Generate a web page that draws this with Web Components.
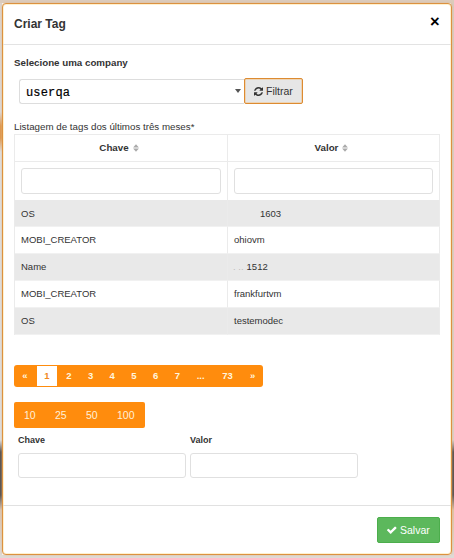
<!DOCTYPE html>
<html lang="pt-BR"><head><meta charset="utf-8"><title>Criar Tag</title>
<style>
html,body{margin:0;height:558px;overflow:hidden}
body{font-family:"Liberation Sans",Arial,sans-serif;color:#333;
background:linear-gradient(#dccbbb,#dccbbb) top/100% 3px no-repeat,linear-gradient(#dedad6,#dedad6) bottom/100% 3px no-repeat,
linear-gradient(#ddd3ca 0,#dcd8d6 112px,#df984d 126px,#df984d 138px,#dedede 152px,#dedede 440px,#57524f 452px,#57524f 495px,#dac5b2 510px,#dedad6 558px) left/2px 100% no-repeat,
linear-gradient(#d9cbbf 0,#dcd0c6 440px,#57524f 452px,#57524f 495px,#dfc2a5 510px,#dedad6 558px) right/3px 100% no-repeat}
</style></head><body><tag-dialog></tag-dialog>
<script>
const define=(name,html)=>{
 const t=document.createElement('template');t.innerHTML='<style>*{box-sizing:border-box}</style>'+html;
 customElements.define(name,class extends HTMLElement{constructor(){super();this.attachShadow({mode:'open'}).append(t.content.cloneNode(true))}});
};
define('text-field',`<style>:host{display:block;box-sizing:border-box;height:26px;border:1px solid #e0e0e0;border-radius:3px;background:#fff}</style>`);
define('sort-icon',`<style>:host{display:block;width:6px;height:8px;margin-top:1px}svg{display:block}</style><svg width="6" height="8" viewBox="0 0 6 8" fill="#aaa"><path d="M3 .3 5.9 3.4H.1zM3 7.7.1 4.6h5.8z"/></svg>`);
define('company-select',`<style>:host{display:flex;box-sizing:border-box;width:225px;height:25px;border:1px solid #ddd;border-right:0;border-radius:3px 0 0 3px;padding:1px 3px 0 6px;align-items:center;justify-content:space-between;font:12px/16px "Liberation Mono",monospace;color:#000;letter-spacing:.15px}i{border:3.5px solid transparent;border-top:4px solid #555;border-bottom:0;margin-bottom:2px}span{padding-top:1px;-webkit-text-stroke:.2px #000}</style><span><slot></slot></span><i></i>`);
define('filter-button',`<style>:host{display:flex;box-sizing:border-box;width:59px;height:26px;border:1px solid #dd8b31;border-radius:2px;background:#e6e6e6;align-items:center;padding-left:9px;font-size:10.5px;gap:3px;box-shadow:inset 0 0 0 .5px #f3c184}svg{display:block}</style><svg width="9" height="9" viewBox="0 0 1536 1536" fill="#333"><path d="M1511 928q0 5-1 7-64 268-268 434.5t-478 166.5q-146 0-282.5-55t-243.5-157l-129 129q-19 19-45 19t-45-19-19-45v-448q0-26 19-45t45-19h448q26 0 45 19t19 45-19 45l-137 137q71 66 161 102t187 36q134 0 250-65t186-179q11-17 53-117 8-23 30-23h192q13 0 22.5 9.5t9.5 22.5zm25-800v448q0 26-19 45t-45 19h-448q-26 0-45-19t-19-45 19-45l138-138q-148-137-349-137-134 0-250 65t-186 179q-11 17-53 117-8 23-30 23h-199q-13 0-22.5-9.5t-9.5-22.5v-7q65-268 270-434.5t480-166.5q146 0 284 55.5t245 156.5l130-129q19-19 45-19t45 19 19 45z"/></svg><slot></slot>`);
define('save-button',`<style>:host{display:flex;box-sizing:border-box;width:63px;height:26px;border:1px solid #4cae4c;border-radius:2px;background:#5cb85c;color:#fff;align-items:center;padding:0 0 1px 9px;font-size:10.5px;gap:3.5px}svg{display:block}</style><svg width="9.5" height="8" viewBox="121 266 1550 1260" fill="#fff"><path d="M1671 566q0 40-28 68l-724 724-136 136q-28 28-68 28t-68-28l-136-136-362-362q-28-28-28-68t28-68l136-136q28-28 68-28t68 28l294 295 656-657q28-28 68-28t68 28l136 136q28 28 28 68z"/></svg><slot></slot>`);
define('tags-table',`<style>:host{display:block;width:426px;font-size:9.5px}
.g{display:grid;grid-template-columns:213px 212px;grid-template-rows:27px 38px 27px 27px 27px 27px 27px;border-top:1px solid #ebebeb;border-left:1px solid #ebebeb}
.g>*{border-right:1px solid #ebebeb}.h{display:flex;justify-content:center;align-items:center;font-weight:bold;font-size:9.75px;gap:4px;padding:0 4px 1px 0;border-bottom:1px solid #ebebeb}.i{padding:6px 6px 0}
.c{padding:0 6px 1px;line-height:12px;display:flex;align-items:center;white-space:pre;border-bottom:1px solid #f1f1f1}.s{background:#e9e9e9}.m{color:#bbb}.s .m{margin-right:3px}.f{padding-top:1px;padding-bottom:0}.one{padding-left:32px}</style>
<div class="g"><div class="h">Chave<sort-icon></sort-icon></div><div class="h">Valor<sort-icon></sort-icon></div><div class="i"><text-field></text-field></div><div class="i"><text-field></text-field></div>
<div class="c s f">OS</div><div class="c s f one">1603</div><div class="c">MOBI_CREATOR</div><div class="c">ohiovm</div><div class="c s">Name</div><div class="c s" style="padding-left:5px"><span class="m">. ..</span>1512</div><div class="c">MOBI_CREATOR</div><div class="c">frankfurtvm</div><div class="c s">OS</div><div class="c s">testemodec</div></div>`);
define('page-numbers',`<style>:host{display:flex;width:249px;height:22px;border-radius:3px;background:#ff8c0d;color:#fff5df;font-size:9.5px;font-weight:bold;align-items:center;overflow:hidden}
span{width:21.7px;text-align:center;flex:none;line-height:20px}.a{background:#fff;color:#f18a20;width:20px;margin:0 1px}</style>
<span style="width:22px">«</span><span class="a">1</span><span>2</span><span>3</span><span>4</span><span>5</span><span>6</span><span>7</span><span style="width:25px">...</span><span style="width:29px">73</span><span style="width:21px">»</span>`);
define('page-sizes',`<style>:host{display:flex;box-sizing:border-box;width:131px;height:26px;border-radius:2px;background:#ff8c0d;color:#fff0d8;font-size:10.5px;align-items:center;padding:0 0 0 10px}span{flex:none;width:31px}</style><span>10</span><span>25</span><span>50</span><span>100</span>`);
define('labeled-field',`<style>:host{display:block;width:168px;font-size:9px;font-weight:bold}label{display:block;line-height:12px;margin-bottom:7px}text-field{height:25px}</style><label><slot></slot></label><text-field></text-field>`);
define('tag-dialog',`<style>:host{display:flex;flex-direction:column;box-sizing:border-box;width:450px;height:552px;margin:3px 0 0 2px;background:#fff;border:1px solid #dc9140;border-radius:4px;box-shadow:0 0 2px #ddb68b,inset 0 0 0 1px #fff1cf}
header{display:flex;height:41px;border-bottom:1px solid #e3e3e3;padding:0 11px;justify-content:space-between;align-items:center;font:bold 12px/16px "Liberation Sans",sans-serif}.x{width:10px;height:16px;font:bold 16.5px/10px "Liberation Sans",sans-serif;color:#000}
main{height:461px;flex:none;padding:12px 11px 0;font-size:9.75px;border-bottom:1px solid #e1e1e1}
h2{font-size:9.75px;line-height:12px;margin:0}.r{display:flex;align-items:flex-start;padding:9px 0 0 5px}.r company-select{margin-top:1px}.r+p{font-size:9.75px;line-height:12px;margin:17px 0 1px}
page-numbers{margin-top:30px}page-sizes{margin-top:15px}.f{display:flex;gap:4px;padding:6px 0 0 4px}footer{display:flex;justify-content:flex-end;padding:11px 11px 0}</style>
<header><span>Criar Tag</span><span class="x">×</span></header>
<main><h2>Selecione uma company</h2><div class="r"><company-select>userqa</company-select><filter-button>Filtrar</filter-button></div><p>Listagem de tags dos últimos três meses*</p><tags-table></tags-table><page-numbers></page-numbers><page-sizes></page-sizes><div class="f"><labeled-field>Chave</labeled-field><labeled-field>Valor</labeled-field></div></main>
<footer><save-button>Salvar</save-button></footer>`);
</script></body></html>
